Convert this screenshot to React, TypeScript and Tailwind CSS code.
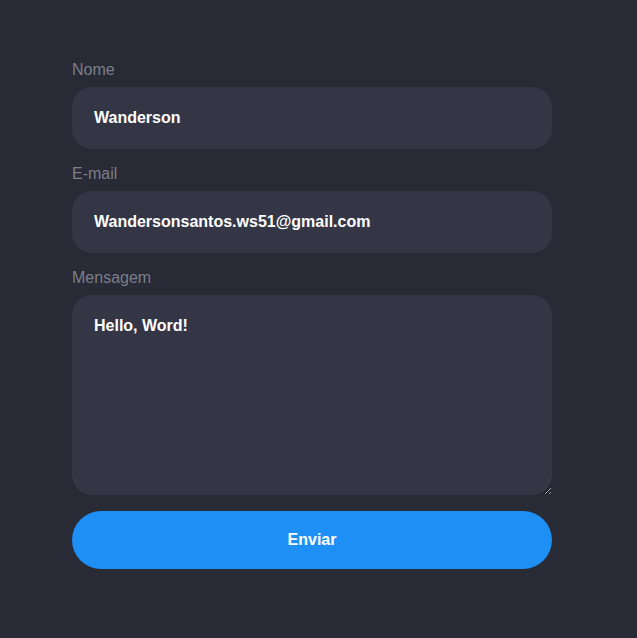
import React from "react";

export default function App() {
  return (
    <div className="min-h-[638px] w-full bg-[#282a36] pt-[61px]" style={{ fontFamily: '"Liberation Sans", Arial, sans-serif' }}>
      <form className="ml-[72px] flex w-[480px] flex-col" onSubmit={(e) => e.preventDefault()}>
        <label className="text-[16px] leading-[18px] text-[#7c7e8a]">Nome</label>
        <input
          className="mt-[8px] h-[62px] w-full rounded-[20px] bg-[#343646] px-[22px] text-[16px] font-bold text-white outline-none"
          defaultValue="Wanderson"
        />
        <label className="mt-[16px] text-[16px] leading-[18px] text-[#7c7e8a]">E-mail</label>
        <input
          className="mt-[8px] h-[62px] w-full rounded-[20px] bg-[#343646] px-[22px] text-[16px] font-bold text-white outline-none"
          defaultValue="Wandersonsantos.ws51@gmail.com"
        />
        <label className="mt-[16px] text-[16px] leading-[18px] text-[#7c7e8a]">Mensagem</label>
        <textarea
          className="mt-[8px] h-[200px] w-full rounded-[20px] bg-[#343646] px-[22px] pt-[22px] text-[16px] leading-[18px] font-bold text-white outline-none"
          defaultValue="Hello, Word!"
        />
        <button
          type="submit"
          className="mt-[16px] h-[58px] w-full rounded-full bg-[#1e90f5] text-[16px] font-bold text-white"
        >
          Enviar
        </button>
      </form>
    </div>
  );
}
